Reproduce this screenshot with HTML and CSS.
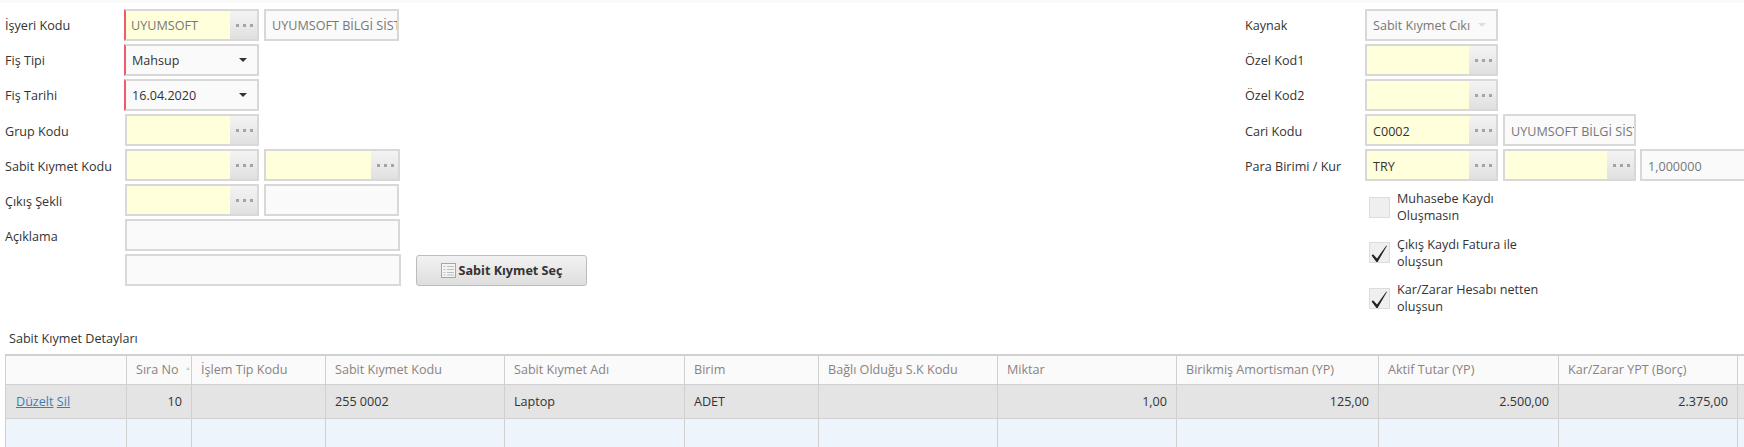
FILE: index.html
```html
<!DOCTYPE html>
<html lang="tr">
<head>
<meta charset="utf-8">
<title>Sabit Kıymet</title>
<link rel="stylesheet" href="styles.css">
</head>
<body>
<div class="topbar"></div>
<div class="form">
  <div class="col-left">
    <div class="row"><div class="lbl">İşyeri Kodu</div>
      <div class="lookup req"><div class="val ro">UYUMSOFT</div><div class="dots"></div></div>
      <div class="box w135 ro">UYUMSOFT BİLGİ SİST</div></div>
    <div class="row"><div class="lbl">Fiş Tipi</div>
      <div class="select req"><span>Mahsup</span><i class="arrow"></i></div></div>
    <div class="row"><div class="lbl">Fiş Tarihi</div>
      <div class="select req"><span>16.04.2020</span><i class="arrow"></i></div></div>
    <div class="row"><div class="lbl">Grup Kodu</div>
      <div class="lookup"><div class="val"></div><div class="dots"></div></div></div>
    <div class="row"><div class="lbl">Sabit Kıymet Kodu</div>
      <div class="lookup"><div class="val"></div><div class="dots"></div></div>
      <div class="lookup"><div class="val"></div><div class="dots"></div></div></div>
    <div class="row"><div class="lbl">Çıkış Şekli</div>
      <div class="lookup"><div class="val"></div><div class="dots"></div></div>
      <div class="box w135"></div></div>
    <div class="row"><div class="lbl">Açıklama</div><div class="box w275"></div></div>
    <div class="row"><div class="lbl"></div><div class="box w276"></div>
      <button class="btn" type="button">
        <svg class="btn-icon" width="15" height="15" viewBox="0 0 15 15"><rect x="0.5" y="0.5" width="14" height="14" fill="#f4f4f4" stroke="#a6a6a6"/><path d="M2.5 3.5h2M2.5 6.5h2M2.5 9.5h2M2.5 12h2M6 3.5h7M6 6.5h7M6 9.5h7M6 12h7" stroke="#bcbcbc" fill="none"/></svg>Sabit Kıymet Seç</button></div>
  </div>
  <div class="col-right">
    <div class="row"><div class="lbl lbl-r">Kaynak</div>
      <div class="select disabled"><span>Sabit Kıymet Cıkı</span><i class="arrow"></i></div></div>
    <div class="row"><div class="lbl lbl-r">Özel Kod1</div>
      <div class="lookup"><div class="val"></div><div class="dots"></div></div></div>
    <div class="row"><div class="lbl lbl-r">Özel Kod2</div>
      <div class="lookup"><div class="val"></div><div class="dots"></div></div></div>
    <div class="row"><div class="lbl lbl-r">Cari Kodu</div>
      <div class="lookup"><div class="val">C0002</div><div class="dots"></div></div>
      <div class="box w133 ro">UYUMSOFT BİLGİ SİST</div></div>
    <div class="row"><div class="lbl lbl-r">Para Birimi / Kur</div>
      <div class="lookup"><div class="val">TRY</div><div class="dots"></div></div>
      <div class="lookup"><div class="val"></div><div class="dots"></div></div>
      <div class="box wrest ro">1,000000</div></div>
    <div class="checks">
      <div class="check"><div class="cb"></div><div class="cb-text">Muhasebe Kaydı Oluşmasın</div></div>
      <div class="check"><div class="cb"><svg width="21" height="21" viewBox="0 0 21 21"><path d="M2.6 13.4 4 12.2 8 16.4 17.4 3.4 18 3.8 8.6 20 7.4 20Z" fill="#222"/></svg></div><div class="cb-text">Çıkış Kaydı Fatura ile oluşsun</div></div>
      <div class="check"><div class="cb"><svg width="21" height="21" viewBox="0 0 21 21"><path d="M2.6 13.4 4 12.2 8 16.4 17.4 3.4 18 3.8 8.6 20 7.4 20Z" fill="#222"/></svg></div><div class="cb-text">Kar/Zarar Hesabı netten oluşsun</div></div>
    </div>
  </div>
</div>
<div class="section-title">Sabit Kıymet Detayları</div>
<table class="grid">
  <colgroup>
    <col class="c1"><col class="c2"><col class="c3"><col class="c4"><col class="c5"><col class="c6"><col class="c7"><col class="c8"><col class="c9"><col class="c10"><col class="c11"><col class="c12">
  </colgroup>
  <thead>
    <tr><th></th><th class="sorted">Sıra No</th><th>İşlem Tip Kodu</th><th>Sabit Kıymet Kodu</th><th>Sabit Kıymet Adı</th><th>Birim</th><th>Bağlı Olduğu S.K Kodu</th><th>Miktar</th><th>Birikmiş Amortisman (YP)</th><th>Aktif Tutar (YP)</th><th>Kar/Zarar YPT (Borç)</th><th></th></tr>
  </thead>
  <tbody>
    <tr class="sel"><td class="act"><a href="#">Düzelt</a> <a href="#">Sil</a></td><td class="num">10</td><td></td><td>255 0002</td><td>Laptop</td><td>ADET</td><td></td><td class="num">1,00</td><td class="num">125,00</td><td class="num">2.500,00</td><td class="num">2.375,00</td><td></td></tr>
    <tr class="empty"><td></td><td></td><td></td><td></td><td></td><td></td><td></td><td></td><td></td><td></td><td></td><td></td></tr>
  </tbody>
</table>
</body>
</html>
```
FILE: styles.css
```css
* { box-sizing: border-box; }
html, body { margin: 0; height: 447px; overflow: hidden; background: #fff; }
body { font-family: "Open Sans", "Liberation Sans", sans-serif; font-size: 12.6px; color: #333; }
.topbar { height: 3px; background: #fafafa; }
.form { display: flex; padding: 6px 0 0 5px; height: 327px; }
.col-left { flex: 0 0 1240px; }
.col-right { flex: 1; min-width: 0; }
.row { display: flex; align-items: center; gap: 5px; height: 32px; margin-bottom: 3px; }
.lbl { flex: 0 0 115px; padding-top: 1px; white-space: nowrap; color: #333; }
.row:nth-child(n+4) .lbl { padding-top: 3px; }
.row:nth-child(n+4) .val, .row:nth-child(n+4) .box { line-height: 31px; }
.lookup { display: flex; flex: 0 0 134px; height: 32px; border: 2px solid #d8d8d8; background: #ffffdb; }
.col-left .row .lookup + .lookup { flex-basis: 136px; }
.col-right .lookup, .col-right .select { flex-basis: 133px; }
.col-right .row .lookup + .lookup { flex-basis: 133px; }
.lookup.req, .select.req { border-left: 2px solid #ef5b6b; margin-left: -1px; flex-basis: 135px; }
.val { flex: 1; min-width: 0; padding: 0 6px; line-height: 29px; overflow: hidden; white-space: nowrap; }
.req .val { padding-left: 5px; }
.ro { color: #777; }
.dots { flex: 0 0 27px; position: relative; background: linear-gradient(#f4f4f4, #e0e0e0); }
.dots::before { content: ""; position: absolute; left: 6px; top: 13px; width: 3px; height: 3px; background: #a4a4a4; box-shadow: 7px 0 #a4a4a4, 14px 0 #a4a4a4; }
.select { display: flex; align-items: center; justify-content: space-between; flex: 0 0 135px; height: 32px; padding: 0 22px 0 6px; border: 2px solid #d8d8d8; background: #fafafa; white-space: nowrap; }
.select span { overflow: hidden; }
.arrow { flex: none; width: 0; height: 0; border: 4px solid transparent; border-top-color: #333; border-bottom: 0; margin-right: -12px; }
.select.disabled { color: #777; padding-right: 18px; }
.select.disabled .arrow { border-top-color: #ddd; margin-right: -8px; }
.box { height: 32px; padding: 0 2px 0 6px; border: 2px solid #d8d8d8; background: #fafafa; line-height: 29px; overflow: hidden; white-space: nowrap; }
.w133 { flex: 0 0 133px; }
.w135 { flex: 0 0 135px; }
.w275 { flex: 0 0 275px; }
.w276 { flex: 0 0 276px; }
.wrest { flex: 0 0 125px; margin-left: -1px; }
.btn { flex: 0 0 171px; height: 31px; margin-left: 10px; padding: 0; display: flex; align-items: center; justify-content: center; gap: 3px; border: 1px solid #bcbcbc; border-radius: 3px; background: linear-gradient(#f2f2f2, #dedede); font: bold 12.6px "Open Sans", "Liberation Sans", sans-serif; color: #333; }
.checks { padding: 6px 0 0 124px; }
.check { display: flex; align-items: center; gap: 7px; width: 190px; height: 34px; margin-bottom: 11.5px; }
.cb { flex: 0 0 21px; height: 21px; background: #efefef; border: 1px solid #dcdcdc; overflow: visible; }
.cb svg { display: block; margin: -1px; }
.cb-text { width: 150px; line-height: 17px; color: #333; }
.section-title { margin: 0 0 0 9px; height: 24px; line-height: 18px; color: #333; }
.grid { table-layout: fixed; border-collapse: collapse; width: 1732px; margin-left: 5px; border-top: 2px solid #d0d0d0; border-left: 1px solid #d0d0d0; }
.grid th, .grid td { border: 1px solid #d0d0d0; padding: 0 9px; text-align: left; font-weight: normal; overflow: hidden; white-space: nowrap; }
.grid th { height: 29px; background: #fafafa; color: #8a8282; position: relative; }
.grid td { height: 34px; }
.sel td { background: #e4e4e4; color: #333; }
.empty td { background: #edf4fb; height: 34px; }
.grid td.num { text-align: right; }
.grid td.act { padding-left: 10px; }
.act a { color: #3f7cb6; }
.sorted::after { content: ""; position: absolute; right: 1px; top: 11px; width: 0; height: 0; border: 2px solid transparent; border-bottom: 3px solid #ccc; border-top: 0; }
.c1 { width: 121px; } .c2 { width: 65px; } .c3 { width: 134px; } .c4 { width: 179px; }
.c5 { width: 180px; } .c6 { width: 134px; } .c7 { width: 179px; } .c8 { width: 179px; }
.c9 { width: 202px; } .c10 { width: 180px; } .c11 { width: 179px; } .c12 { width: 100px; }
```
